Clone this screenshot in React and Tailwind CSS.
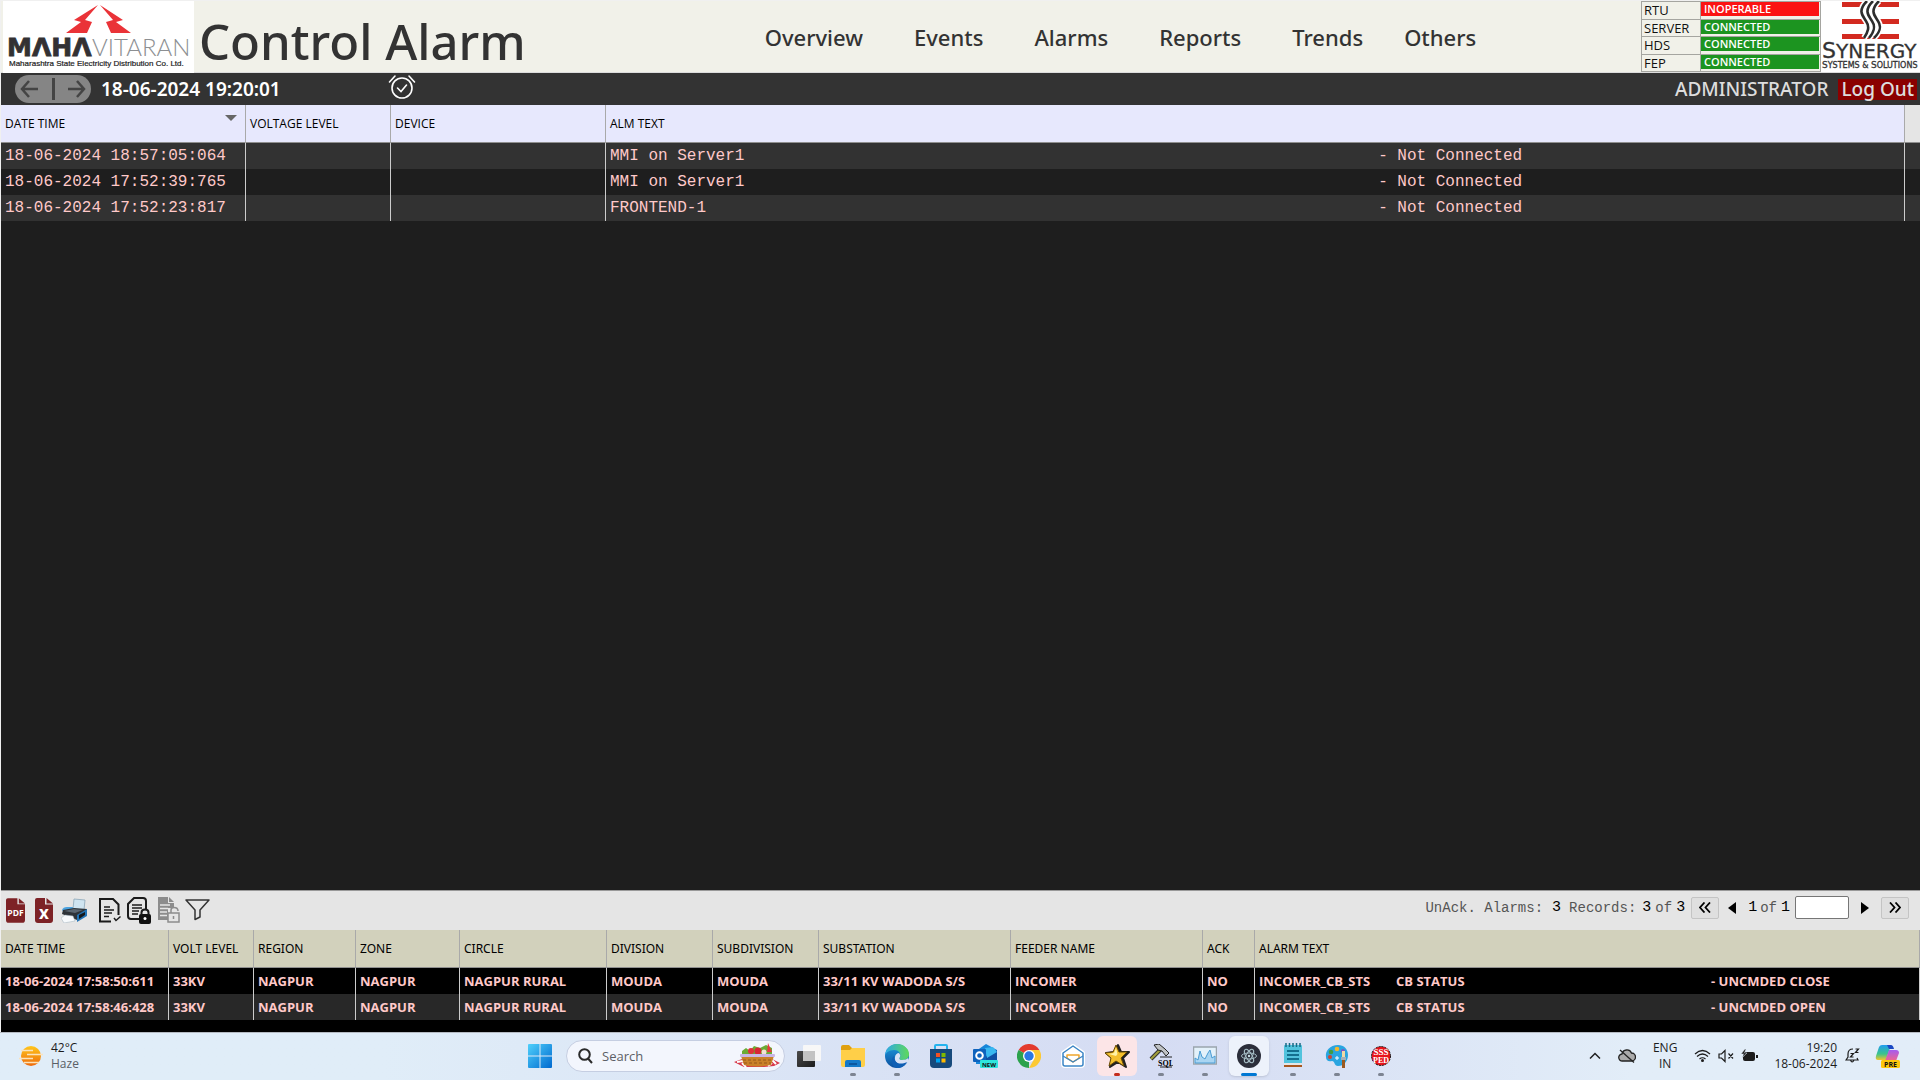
import React from "react";

const alarms = [
  { time: "18-06-2024 18:57:05:064", text: "MMI on Server1", state: "- Not Connected" },
  { time: "18-06-2024 17:52:39:765", text: "MMI on Server1", state: "- Not Connected" },
  { time: "18-06-2024 17:52:23:817", text: "FRONTEND-1", state: "- Not Connected" },
];

const events = [
  { time: "18-06-2024 17:58:50:611", state: "- UNCMDED CLOSE" },
  { time: "18-06-2024 17:58:46:428", state: "- UNCMDED OPEN" },
];

const statuses = [
  { name: "RTU", value: "INOPERABLE", color: "bg-[#fb1313]" },
  { name: "SERVER", value: "CONNECTED", color: "bg-[#1c9420]" },
  { name: "HDS", value: "CONNECTED", color: "bg-[#1c9420]" },
  { name: "FEP", value: "CONNECTED", color: "bg-[#1c9420]" },
];

const menu = ["Overview", "Events", "Alarms", "Reports", "Trends"];

function MahavitaranLogo() {
  return (
    <svg className="h-[72px] w-[191px] shrink-0 bg-white" viewBox="0 0 191 72" role="img" aria-label="Mahavitaran">
      <path d="M95 4 L71 19 L78 21 L63 32 L84 32 L89 21 L82 19 Z" fill="#ea3338" />
      <path d="M97 4 L120 19 L113 21 L128 32 L108 32 L103 21 L110 19 Z" fill="#ea3338" />
      <text x="4" y="55" fontFamily="DejaVu Sans" fontWeight="700" fontSize="25" fill="#333133" stroke="#333133" strokeWidth="0.8">MΛHΛ</text>
      <text x="89" y="55" fontFamily="Lato" fontWeight="300" fontSize="24" fill="#8d8f92">VITARAN</text>
      <text x="6" y="65" fontFamily="Liberation Sans" fontSize="8" fill="#222" stroke="#222" strokeWidth="0.2">
        Maharashtra State Electricity Distribution Co. Ltd.
      </text>
    </svg>
  );
}

function SynergyLogo() {
  return (
    <svg className="h-[71px] w-[99px] shrink-0 bg-white" viewBox="0 0 99 71" role="img" aria-label="Synergy Systems and Solutions">
      <g fill="#d32a20">
        <rect x="21" y="1" width="57" height="5" />
        <rect x="21" y="18" width="57" height="5" />
        <rect x="21" y="33" width="57" height="5" />
      </g>
      <g fill="none">
        <path d="M46 0 C36 10 42 15 45 20 C49 26 47 31 43 37" stroke="#fff" strokeWidth="6" />
        <path d="M52 0 C42 10 48 15 51 20 C55 26 53 31 48 37" stroke="#fff" strokeWidth="6" />
        <path d="M58 0 C48 10 54 15 57 20 C61 26 59 31 53 37" stroke="#fff" strokeWidth="6" />
        <path d="M46 0 C36 10 42 15 45 20 C49 26 47 31 43 37" stroke="#2d2d2d" strokeWidth="2.6" />
        <path d="M52 0 C42 10 48 15 51 20 C55 26 53 31 48 37" stroke="#2d2d2d" strokeWidth="2.6" />
        <path d="M58 0 C48 10 54 15 57 20 C61 26 59 31 53 37" stroke="#2d2d2d" strokeWidth="2.6" />
      </g>
      <text x="1" y="57" fontFamily="DejaVu Sans" fontSize="22" fill="#333" stroke="#333" strokeWidth="0.3">
        S<tspan fontSize="20">YNERGY</tspan>
      </text>
      <text x="1" y="67" fontFamily="DejaVu Sans" fontSize="9" fill="#333" stroke="#333" strokeWidth="0.3">
        S<tspan fontSize="8">YSTEMS &amp; </tspan>S<tspan fontSize="8">OLUTIONS</tspan>
      </text>
    </svg>
  );
}

function Header() {
  return (
    <header className="flex h-[72px] items-start border-b border-[#dcdcdc] bg-[#f1f1e9]">
      <div className="flex w-[39.8%] items-start pl-[2px]">
        <MahavitaranLogo />
        <h1 className="ml-[5px] mt-3 whitespace-nowrap font-['Noto_Sans'] text-[49px] font-medium leading-[56px] text-[#333]">
          Control Alarm
        </h1>
      </div>
      <nav className="flex gap-[41px] pt-[21px] font-['Noto_Sans'] text-[22px] font-medium leading-[30px] text-[#333]">
        <div className="flex gap-[51px]">
          {menu.map((m) => (
            <a key={m} href="#">{m}</a>
          ))}
        </div>
        <a href="#">Others</a>
      </nav>
      <div className="flex flex-1 items-start justify-end">
        <table className="h-[71px] w-[180px] border-collapse font-['Open_Sans'] text-[12px] leading-4">
          <tbody>
            {statuses.map((s) => (
              <tr key={s.name} className="border border-[#a5a5a0]">
                <th scope="row" className="w-[59px] border-r border-[#a5a5a0] p-0 pl-[2px] text-left align-top text-[13px] font-normal text-[#111]">{s.name}</th>
                <td className="p-0 pr-px align-top">
                  <div className={`${s.color} h-[14px] pl-[3px] text-[11px] font-semibold leading-[14px] text-white`}>{s.value}</div>
                </td>
              </tr>
            ))}
          </tbody>
        </table>
        <SynergyLogo />
      </div>
    </header>
  );
}

function InfoBar() {
  return (
    <div className="flex h-8 items-center bg-[#333] pr-[3px] font-['Noto_Sans'] text-[19px] font-medium leading-[22px] text-[#ddd]">
      <div className="ml-[14px] flex h-7 w-[76px] items-center justify-between rounded-full bg-[#858585] px-1">
        <button type="button" aria-label="Back">
          <svg width="20" height="20" viewBox="0 0 20 20" fill="none" stroke="#444" strokeWidth="2.5"><path d="M10 2 L3 10 L10 18 M3 10 H19" /></svg>
        </button>
        <span className="h-[22px] w-[3px] bg-[#444]" />
        <button type="button" aria-label="Forward">
          <svg width="20" height="20" viewBox="0 0 20 20" fill="none" stroke="#444" strokeWidth="2.5"><path d="M10 2 L17 10 L10 18 M1 10 H17" /></svg>
        </button>
      </div>
      <time className="ml-[10px] w-[287px] font-semibold text-white">18-06-2024 19:20:01</time>
      <button type="button" aria-label="Acknowledge alarms" className="mb-1">
        <svg width="28" height="26" viewBox="0 0 28 26" fill="none" stroke="#fff" strokeWidth="1.6" strokeLinecap="round">
          <circle cx="14" cy="14" r="10" />
          <path d="M9.500 14 L13 17.500 L18.500 11 M1.500 8 L7 2 M26.500 8 L21 2" />
        </svg>
      </button>
      <span className="ml-auto mr-[10px]">ADMINISTRATOR</span>
      <button type="button" className="h-[21px] bg-[#8b0000] px-[3px] leading-[21px]">Log Out</button>
    </div>
  );
}

const headCell = "h-[38px] border-b border-r border-[#a9a9a9] border-b-[#8f8f8f] p-0 pl-1 text-left font-normal";

function AlarmTable() {
  return (
    <table className="w-full table-fixed border-separate border-spacing-0">
      <colgroup>
        <col className="w-[245px]" />
        <col className="w-[145px]" />
        <col className="w-[215px]" />
        <col />
        <col className="w-[15px]" />
      </colgroup>
      <thead>
        <tr className="bg-[#e7e8fd] font-['Open_Sans'] text-[12px] text-black">
          <th className={headCell}>
            <div className="flex items-center justify-between">
              DATE TIME
              <svg className="mb-3 mr-2" width="12" height="6" viewBox="0 0 12 6"><path d="M0 0H12L6 6Z" fill="#666" /></svg>
            </div>
          </th>
          <th className={headCell}>VOLTAGE LEVEL</th>
          <th className={headCell}>DEVICE</th>
          <th className={headCell}>ALM TEXT</th>
          <th className="border-b border-[#8f8f8f] bg-[#e5e5e5] p-0" />
        </tr>
      </thead>
      <tbody className="font-['Liberation_Mono',monospace] text-[16px] leading-[26px] text-[#ffc9c9]">
        {alarms.map((a) => (
          <tr key={a.time} className="h-[26px] odd:bg-[#323232] even:bg-[#1e1e1e]">
            <td className="border-r border-[#ccc] p-0 pl-1">{a.time}</td>
            <td className="border-r border-[#ccc] p-0" />
            <td className="border-r border-[#ccc] p-0" />
            <td className="whitespace-pre border-r border-[#ccc] p-0 pl-1">{a.text.padEnd(80) + a.state}</td>
            <td className="p-0" />
          </tr>
        ))}
      </tbody>
    </table>
  );
}

function DocIcons() {
  return (
    <div className="mb-px flex items-center">
      <button type="button" aria-label="Export PDF" className="ml-[5px]">
        <svg width="19" height="25" viewBox="0 0 20 26">
          <path d="M2 0H12V6.500H20V23Q20 26 17 26H3Q0 26 0 23V2Q0 0 2 0Z" fill="#7d2226" />
          <path d="M13.500 0L20 5.500H13.500Z" fill="#7d2226" />
          <text x="10" y="18.500" textAnchor="middle" fontFamily="Open Sans" fontWeight="700" fontSize="9" fill="#fff">PDF</text>
        </svg>
      </button>
      <button type="button" aria-label="Export Excel" className="ml-[10px]">
        <svg width="18" height="25" viewBox="0 0 18 25">
          <path d="M2 0H10V6.500H18V22Q18 25 15 25H3Q0 25 0 22V2Q0 0 2 0Z" fill="#7d2226" />
          <path d="M11.500 0L18 5.500H11.500Z" fill="#7d2226" />
          <text x="9" y="21" textAnchor="middle" fontFamily="Open Sans" fontWeight="700" fontSize="17" fill="#fff">x</text>
        </svg>
      </button>
      <button type="button" aria-label="Print" className="ml-2">
        <svg width="27" height="25" viewBox="0 0 27 25">
          <path d="M1 12Q2 9 6 9H13V12L3 15Z" fill="#4ba3e0" />
          <path d="M13 1L24 2L23 12L12 11Z" fill="#cfe4f0" stroke="#8ba6b8" strokeWidth="0.8" />
          <path d="M2 12L13 10L26 11V15L16 22L1 16Z" fill="#2e3338" />
          <path d="M3 13L13 11L22 12L14 15Z" fill="#5b6670" />
          <path d="M16 17L26 11V18L16 24Z" fill="#2373b4" />
          <path d="M18 17L24 14V17L18 21Z" fill="#16181a" />
          <path d="M4 17L12 18L14 23L3 25L0 20Z" fill="#f7fafc" stroke="#9eb0bc" strokeWidth="0.5" />
        </svg>
      </button>
      <button type="button" aria-label="Acknowledge page" className="ml-[11px]">
        <svg width="22" height="25" viewBox="0 0 22 25" fill="none" stroke="#1b1b1b" strokeWidth="2">
          <path d="M12 23.500H1V1H14L19.500 6.500V17" />
          <path d="M5 9H11M5 12H15M5 15H13M5 18.500H10M15 20L17 22.500L21.500 18.500" strokeWidth="1.500" />
        </svg>
      </button>
      <button type="button" aria-label="Lock page" className="ml-[6px]">
        <svg width="24" height="27" viewBox="0 0 24 27" fill="none" stroke="#1b1b1b" strokeWidth="2">
          <path d="M12 22H4Q1 22 1 19V7L7 1H16Q19 1 19 4V12" />
          <path d="M5 8H15M5 11H15M5 14H12M5 17H11" strokeWidth="1.700" />
          <rect x="12" y="17" width="12" height="10" rx="2" fill="#111" stroke="none" />
          <path d="M14.500 18V15.500Q14.500 12.500 18 12.500T21.500 15.500V18" />
          <circle cx="18" cy="21.500" r="1.500" fill="#fff" stroke="none" />
        </svg>
      </button>
      <button type="button" aria-label="Unlock page" className="ml-[7px]">
        <svg width="22" height="26" viewBox="0 0 22 26" fill="none" stroke="#8c8c8c" strokeWidth="1.5">
          <path d="M0 0H10V6H16V11H10V23H0Z" fill="#8c8c8c" stroke="none" />
          <path d="M11 0L16 5H11Z" fill="#8c8c8c" stroke="none" />
          <path d="M2 8H12M2 11.500H10M2 15H9M2 18.500H9" stroke="#e5e5e5" />
          <rect x="10" y="16" width="11" height="9" fill="#e5e5e5" />
          <path d="M13 16V13Q13 10.500 16 10.500Q20 10.500 20 14M15.500 19V22" />
        </svg>
      </button>
      <button type="button" aria-label="Filter" className="ml-[5px]">
        <svg width="25" height="22" viewBox="0 0 25 22" fill="none" stroke="#333" strokeWidth="1.500" strokeLinejoin="round">
          <path d="M1 1H24L15 11V18L10 20.500V11Z" />
        </svg>
      </button>
    </div>
  );
}

function Toolbar() {
  return (
    <div className="flex h-10 items-center border-t border-[#999] bg-[#e5e5e5] pr-[11px]">
      <DocIcons />
      <div className="mb-[6px] ml-auto flex items-center whitespace-pre font-['Liberation_Mono',monospace] text-[14px] leading-[22px] text-[#555]">
        <span>UnAck. Alarms:</span>
        <span className="ml-[9px] text-[15px] text-black">3</span>
        <span className="ml-2">Records:</span>
        <span className="ml-[6px] text-[15px] text-black">3</span>
        <span className="mx-1">of</span>
        <span className="text-[15px] text-black">3</span>
        <button type="button" aria-label="First page" className="ml-[6px] flex h-[22px] w-7 items-center justify-center rounded-xs border border-[#c4c4c4] bg-[#dfdfdf]">
          <svg width="12" height="11" viewBox="0 0 12 11" fill="none" stroke="#000" strokeWidth="1.800"><path d="M5.500 .5L1 5.500L5.500 10.500M11 .5L6.500 5.500L11 10.500" /></svg>
        </button>
        <button type="button" aria-label="Previous page" className="ml-[9px]">
          <svg width="8" height="12" viewBox="0 0 8 12"><path d="M8 0V12L0 6Z" fill="#000" /></svg>
        </button>
        <span className="ml-3 text-[15px] text-black">1</span>
        <span className="mx-[3px]">of</span>
        <span className="ml-px text-[15px] text-black">1</span>
        <input aria-label="Page number" className="ml-[5px] h-[23px] w-[54px] rounded-xs border border-[#767676] bg-white px-1 text-black" />
        <button type="button" aria-label="Next page" className="ml-3">
          <svg width="8" height="12" viewBox="0 0 8 12"><path d="M0 0V12L8 6Z" fill="#000" /></svg>
        </button>
        <button type="button" aria-label="Last page" className="ml-3 flex h-[22px] w-7 items-center justify-center rounded-xs border border-[#c4c4c4] bg-[#dfdfdf]">
          <svg width="12" height="11" viewBox="0 0 12 11" fill="none" stroke="#000" strokeWidth="1.800"><path d="M1 .5L5.500 5.500L1 10.500M6.500 .5L11 5.500L6.500 10.500" /></svg>
        </button>
      </div>
    </div>
  );
}

const columns = ["DATE TIME", "VOLT LEVEL", "REGION", "ZONE", "CIRCLE", "DIVISION", "SUBDIVISION", "SUBSTATION", "FEEDER NAME", "ACK", "ALARM TEXT"];

function EventTable() {
  const cell = "border-r border-[#ccc] p-0 pl-1 pt-px whitespace-nowrap";
  return (
    <div className="bg-black pb-3">
      <table className="w-full table-fixed border-separate border-spacing-0 font-['Open_Sans'] text-[12px]">
        <colgroup>
          <col className="w-[168px]" />
          <col className="w-[85px]" />
          <col className="w-[102px]" />
          <col className="w-[104px]" />
          <col className="w-[147px]" />
          <col className="w-[106px]" />
          <col className="w-[106px]" />
          <col className="w-[192px]" />
          <col className="w-[192px]" />
          <col className="w-[52px]" />
          <col />
        </colgroup>
        <thead>
          <tr className="bg-[#d2d1bc] font-['Noto_Sans'] text-black">
            {columns.map((c) => (
              <th key={c} className={headCell}>{c}</th>
            ))}
          </tr>
        </thead>
        <tbody className="text-[13px] font-bold leading-[25px] text-[#ffc9c9]">
          {events.map((e) => (
            <tr key={e.time} className="h-[26px] odd:bg-black even:bg-[#282828]">
              {[e.time, "33KV", "NAGPUR", "NAGPUR", "NAGPUR RURAL", "MOUDA", "MOUDA", "33/11 KV WADODA S/S", "INCOMER", "NO"].map((v, i) => (
                <td key={i} className={cell}>{v}</td>
              ))}
              <td className={cell}>
                <div className="flex">
                  <span className="w-[137px]">INCOMER_CB_STS</span>
                  <span className="w-[315px]">CB STATUS</span>
                  <span>{e.state}</span>
                </div>
              </td>
            </tr>
          ))}
        </tbody>
      </table>
    </div>
  );
}

function TaskIcon({ label, children, mark = "", tile = "" }) {
  return (
    <button type="button" aria-label={label} className={`relative mx-[2px] flex h-10 w-10 items-center justify-center rounded-md ${tile}`}>
      {children}
      {mark && <span className={`absolute bottom-0 rounded-full ${mark}`} />}
    </button>
  );
}

const running = "h-[3px] w-[6px] bg-[#7d8492]";

function TaskIcons() {
  return (
    <>
      <TaskIcon label="Task view">
        <svg width="24" height="24" viewBox="0 0 24 24">
          <defs><linearGradient id="tv" x1="0" y1="0" x2="1" y2="1"><stop offset="0" stopColor="#4a4a4a" /><stop offset="1" stopColor="#1c1c1c" /></linearGradient></defs>
          <rect x="0" y="7" width="18" height="16" rx="1" fill="url(#tv)" />
          <rect x="6" y="1" width="18" height="16" rx="1" fill="#f7f7f7" />
          <rect x="6" y="7" width="12" height="10" fill="#c3c3c3" />
        </svg>
      </TaskIcon>
      <TaskIcon label="File Explorer" mark={running}>
        <svg width="24" height="22" viewBox="0 0 24 22">
          <path d="M0 2Q0 0 2 0H8L11 3H22Q24 3 24 5V12H0Z" fill="#e0a010" />
          <path d="M0 5H9L11 3H24V20Q24 22 22 22H2Q0 22 0 20Z" fill="#ffcf48" />
          <path d="M4 22V17Q4 15 6 15H18Q20 15 20 17V22Z" fill="#1479c9" />
          <rect x="8" y="18" width="8" height="2" fill="#0b57a0" />
        </svg>
      </TaskIcon>
      <TaskIcon label="Edge" mark={running}>
        <svg width="24" height="24" viewBox="0 0 24 24">
          <defs>
            <linearGradient id="eg" x1="0" y1="0" x2="1" y2="0"><stop offset="0" stopColor="#2da8e8" /><stop offset="1" stopColor="#5fd95a" /></linearGradient>
            <linearGradient id="eb" x1="0" y1="0" x2="0" y2="1"><stop offset="0" stopColor="#1c9be0" /><stop offset="1" stopColor="#0c4f9e" /></linearGradient>
          </defs>
          <circle cx="12" cy="12" r="12" fill="url(#eb)" />
          <path d="M0 11C1 4 6 0 12 0C19 0 24 5 24 10C24 14 21 16 17 16C14 16 14 14 15 13C16 11 15 6 9 6C4 6 1 9 0 11Z" fill="url(#eg)" />
          <path d="M15 13C14 14 14 16 17 16C20 16 22 15 23 14L24 17L20 21C14 22 9 18 10 13C10 11 12 9 14 9Q16 11 15 13Z" fill="#d8e2f6" />
          <path d="M9 12C8 18 14 22 22 18C20 22 16 24 12 24C5 22 6 14 9 12Z" fill="#0f5fb4" />
        </svg>
      </TaskIcon>
      <TaskIcon label="Microsoft Store">
        <svg width="24" height="24" viewBox="0 0 24 24">
          <path d="M6 6V2Q6 1 7 1H17Q18 1 18 2V6" fill="none" stroke="#25b3ee" strokeWidth="2" />
          <path d="M1 5H23V20Q23 24 19 24H5Q1 24 1 20Z" fill="#174a7c" />
          <rect x="7" y="9" width="4" height="4" fill="#f25022" /><rect x="12.500" y="9" width="4" height="4" fill="#7fba00" />
          <rect x="7" y="14.500" width="4" height="4" fill="#00a4ef" /><rect x="12.500" y="14.500" width="4" height="4" fill="#ffb900" />
        </svg>
      </TaskIcon>
      <TaskIcon label="Outlook">
        <svg width="25" height="24" viewBox="0 0 25 24">
          <path d="M3 7L13 0L24 6V20H3Z" fill="#1686d9" />
          <path d="M12 13L24 6V21H10Z" fill="#0f4fa3" />
          <path d="M12 4L20 3L24 8L14 14Z" fill="#39b8f0" />
          <rect x="0" y="5" width="13" height="13" rx="1" fill="#0f63bd" />
          <circle cx="6.500" cy="11.500" r="3.300" fill="none" stroke="#fff" strokeWidth="2" />
          <rect x="7" y="16" width="18" height="8" rx="1" fill="#2ee6dc" />
          <text x="16" y="22.500" textAnchor="middle" fontFamily="Open Sans" fontWeight="700" fontSize="6" fill="#111">NEW</text>
        </svg>
      </TaskIcon>
      <TaskIcon label="Chrome">
        <svg width="24" height="24" viewBox="0 0 24 24">
          <path d="M12 12L1.600 6A12 12 0 0 1 22.400 6Z" fill="#e33b2e" />
          <path d="M12 12L12 24A12 12 0 0 1 1.600 6Z" fill="#2ba24c" />
          <path d="M12 6H22.400A12 12 0 0 1 12 24L17.200 15Z" fill="#fcc934" />
          <circle cx="12" cy="12" r="6" fill="#fff" /><circle cx="12" cy="12" r="4.700" fill="#2a78e4" />
        </svg>
      </TaskIcon>
      <TaskIcon label="Mail">
        <svg width="24" height="24" viewBox="0 0 24 24" fill="#fff" strokeLinejoin="round">
          <path d="M2 9L12 2L22 9V20Q22 22 20 22H4Q2 22 2 20Z" stroke="#fff" strokeWidth="4" />
          <path d="M2 9L12 2L22 9V20Q22 22 20 22H4Q2 22 2 20Z" stroke="#3c86c6" strokeWidth="1.500" />
          <path d="M6 11H18V14L12 18L6 14Z" stroke="#f0a72c" strokeWidth="1.500" />
          <path d="M2 12L12 18L22 12" fill="none" stroke="#3c86c6" strokeWidth="1.300" />
        </svg>
      </TaskIcon>
      <TaskIcon label="Favourites" tile="bg-[#fce5e7]" mark="h-[3px] w-[6px] bg-[#c42b1c]">
        <svg width="26" height="26" viewBox="0 0 26 26" strokeLinejoin="round">
          <path d="M14 2L17 9L25 9L19 15L22 24L14 19L6 24L8 15L2 10L10 9Z" fill="#222" stroke="#222" strokeWidth="2" />
          <path d="M12 2L15 9L23 9L17 15L20 23L12 18L5 23L7 15L1 10L9 9Z" fill="#f4bf2d" stroke="#6b4c05" strokeWidth="1" />
          <path d="M12 5L13.500 11L12 13L5 11L10 10Z" fill="#fff3a8" />
        </svg>
      </TaskIcon>
      <TaskIcon label="SQL tool" mark={running}>
        <svg width="24" height="24" viewBox="0 0 24 24">
          <path d="M12 5L2 15" stroke="#333" strokeWidth="4" /><path d="M12 5L2 15" stroke="#a3a03c" strokeWidth="2" />
          <path d="M5 1L10 0L16 5L20 9L17 12L13 7L9 6Z" fill="#bfc2c4" stroke="#222" strokeWidth="1" />
          <path d="M11 13H23M11 23H23" stroke="#222" />
          <text x="17" y="21.500" textAnchor="middle" fontFamily="Liberation Serif" fontWeight="700" fontSize="8" fill="#000">SQL</text>
        </svg>
      </TaskIcon>
      <TaskIcon label="Performance monitor" mark={running}>
        <svg width="24" height="20" viewBox="0 0 24 20">
          <rect x=".5" y="1" width="23" height="17" fill="#e3f1fa" stroke="#9aa5ad" strokeWidth="1.500" />
          <path d="M2 16V12L5 14L7 5L9 11L12 13L15 7L17 4L19 12L22 10V17H2Z" fill="#a9d5f2" stroke="#4a9cd4" />
        </svg>
      </TaskIcon>
      <TaskIcon label="Control Alarm" tile="bg-[#edf2fb] shadow-sm" mark="h-[3px] w-4 bg-[#0078d4]">
        <svg width="24" height="24" viewBox="0 0 24 24">
          <circle cx="12" cy="12" r="12" fill="#2b2e3a" />
          <g fill="none" stroke="#a5bcc4" strokeWidth="1">
            <ellipse cx="12" cy="12" rx="7.500" ry="3" />
            <ellipse cx="12" cy="12" rx="7.500" ry="3" transform="rotate(60 12 12)" />
            <ellipse cx="12" cy="12" rx="7.500" ry="3" transform="rotate(120 12 12)" />
          </g>
          <circle cx="12" cy="12" r="1.200" fill="#c5dde4" />
        </svg>
      </TaskIcon>
      <TaskIcon label="Notepad" mark={running}>
        <svg width="20" height="25" viewBox="0 0 20 25">
          <rect x="1" y="2" width="18" height="20" rx="1" fill="#52c3dd" />
          <path d="M3 0V4M6.500 0V4M10 0V4M13.500 0V4M17 0V4" stroke="#176a85" strokeWidth="1.500" />
          <path d="M4 8H16M4 12H16M4 16H16" stroke="#13708e" strokeWidth="1.800" />
          <rect x="1" y="20" width="18" height="2" fill="#e6e6e6" /><rect x="1" y="22" width="18" height="2" fill="#a9571e" />
        </svg>
      </TaskIcon>
      <TaskIcon label="Paint" mark={running}>
        <svg width="24" height="24" viewBox="0 0 24 24">
          <path d="M13 1C5 1 0 7 1 13C1 17 4 18 7 17C10 17 9 22 13 22C19 22 23 17 23 11C23 5 19 1 13 1Z" fill="#2aa5e0" />
          <circle cx="6" cy="8" r="2.300" fill="#3f9b46" /><circle cx="12" cy="5" r="2.300" fill="#f2b72c" /><circle cx="5" cy="13" r="2" fill="#d5432f" /><circle cx="18" cy="7" r="2" fill="#7c56c4" />
          <path d="M17 7H20V14H17Z" fill="#f1d8a4" /><path d="M16 13H21V16H16Z" fill="#a4b0b8" /><path d="M17 16H20V24H17Z" fill="#9b5a20" />
          <path d="M12 12V16M10 14H14" stroke="#fff" strokeWidth="1" />
        </svg>
      </TaskIcon>
      <TaskIcon label="SSS PED" mark={running}>
        <svg width="20" height="20" viewBox="0 0 20 20">
          <circle cx="10" cy="10" r="9.500" fill="#e8151b" stroke="#111" strokeDasharray="2 1" />
          <text x="10" y="9" textAnchor="middle" fontFamily="Liberation Serif" fontWeight="700" fontSize="9" fill="#fff">SSS</text>
          <text x="10" y="16.500" textAnchor="middle" fontFamily="Liberation Serif" fontWeight="700" fontSize="8" fill="#fff">PED</text>
        </svg>
      </TaskIcon>
    </>
  );
}

function Taskbar() {
  return (
    <footer className="grid h-12 grid-cols-[1fr_auto_1fr] items-center border-t border-[#b5bac2] bg-linear-to-r from-[#e0edf8] from-20% via-[#d5dcf3] via-60% to-[#e2edf8] to-85% pb-[2px] font-['Open_Sans'] text-[11px] leading-4 text-[#1c1c1c]">
      <div className="flex items-center pl-[19px]">
        <svg width="24" height="22" viewBox="0 0 24 22">
          <defs><linearGradient id="sun" x1="0" y1="0" x2="0" y2="1"><stop offset="0" stopColor="#ffc61a" /><stop offset="1" stopColor="#ee6a0c" /></linearGradient></defs>
          <circle cx="12" cy="11" r="10" fill="url(#sun)" />
          <path d="M2 5.500H14M8 9.500H24M0 13.500H14M5 17.500H20" stroke="#fbe3bb" strokeWidth="1.300" />
        </svg>
        <div className="ml-2 text-[12px]">
          <div>42°C</div>
          <div className="text-[#5a5f66]">Haze</div>
        </div>
      </div>

      <div className="flex items-center pl-[10px]">
        <button type="button" aria-label="Start" className="ml-[1px] mr-[14px]">
          <svg width="24" height="24" viewBox="0 0 24 24">
            <defs><linearGradient id="win" x1="0" y1="0" x2="1" y2="1"><stop offset="0" stopColor="#4fd0fb" /><stop offset="1" stopColor="#0069cf" /></linearGradient></defs>
            <path d="M0 1Q0 0 1 0H11.500V11.500H0ZM12.500 0H23Q24 0 24 1V11.500H12.500ZM0 12.500H11.500V24H1Q0 24 0 23ZM12.500 12.500H24V23Q24 24 23 24H12.500Z" fill="url(#win)" />
          </svg>
        </button>
        <label className="mr-[2px] flex h-8 w-[219px] items-center rounded-full border border-[#c5cee2] bg-[#f3f6fd] pl-[11px] pr-1">
          <svg width="15" height="16" viewBox="0 0 15 16" fill="none" stroke="#2a2a2a" strokeWidth="2"><circle cx="6.500" cy="6.500" r="5.300" /><path d="M10 10.500L14 15" /></svg>
          <input type="text" aria-label="Search" placeholder="Search" className="ml-[9px] w-0 flex-1 bg-transparent text-[13px] outline-none placeholder:text-[#5c5f66]" />
          <svg width="46" height="25" viewBox="0 0 46 25">
            <path d="M0 19L8 16H38L46 20L40 23L30 24H10Z" fill="#d8394a" />
            <path d="M3 19L9 18M12 24L8 20M38 17L42 21M34 23L38 20" stroke="#fff" strokeWidth="2" />
            <path d="M8 8L12 5L16 8L20 3L26 5L32 2L38 5V12H8Z" fill="#6cab35" />
            <circle cx="17" cy="8" r="3" fill="#e0303b" /><circle cx="24" cy="8" r="3.500" fill="#d82435" /><circle cx="30" cy="9" r="2.500" fill="#f2e3d2" /><path d="M33 9L34 0L38 9Z" fill="#e8383f" />
            <path d="M7 13H40L37 22Q23 25 10 22Z" fill="#c98128" />
            <path d="M9 17H38M10 20H37" stroke="#96561a" strokeDasharray="3 2" />
            <rect x="6" y="11" width="35" height="3" rx="1" fill="#c9b6e6" />
          </svg>
        </label>
        <TaskIcons />
      </div>

      <div className="flex items-center justify-end pr-5">
        <button type="button" aria-label="Show hidden icons" className="mr-[17px]">
          <svg width="12" height="7" viewBox="0 0 12 7" fill="none" stroke="#222" strokeWidth="1.500"><path d="M1 6.500L6 1.500L11 6.500" /></svg>
        </button>
        <svg className="mr-[17px]" width="18" height="14" viewBox="0 0 18 14" fill="#aaa" stroke="#222" strokeWidth="1.300">
          <path d="M4.500 12A3.500 3.500 0 0 1 4 5A5 5 0 0 1 13.500 4A4 4 0 0 1 13.500 12Z" /><path d="M2 1L16 13.500" />
        </svg>
        <div className="mr-[17px] text-center text-[12px]">
          <div>ENG</div>
          <div>IN</div>
        </div>
        <svg className="mr-[7px]" width="17" height="14" viewBox="0 0 17 14" fill="none" stroke="#1c1c1c" strokeWidth="1.200">
          <path d="M1 5Q8.500 -2 16 5M3 7.500Q8.500 2.500 14 7.500M5.500 10Q8.500 7.500 11.500 10" /><circle cx="8.500" cy="11.500" r="1.500" fill="#1c1c1c" stroke="none" />
        </svg>
        <svg className="mr-[7px]" width="16" height="14" viewBox="0 0 16 14" fill="none" stroke="#1c1c1c" strokeWidth="1.200">
          <path d="M1 5H3.500L7 1.500V12.500L3.500 9H1ZM10.500 4.500L15 9.500M15 4.500L10.500 9.500" />
        </svg>
        <svg className="mr-4" width="17" height="13" viewBox="0 0 17 13" fill="#1c1c1c">
          <rect x="2" y="3" width="12" height="9" rx="2" /><rect x="15" y="6" width="2" height="3" /><path d="M4 0L0 5H3L1 9L6 4H3.500L5 0Z" stroke="#e2edf8" strokeWidth="0.500" />
        </svg>
        <div className="mr-2 text-right text-[12px]">
          <div>19:20</div>
          <div>18-06-2024</div>
        </div>
        <svg className="mr-[15px]" width="15" height="15" viewBox="0 0 15 15" fill="none" stroke="#1c1c1c" strokeWidth="1.200">
          <path d="M8 1Q3 1 3 6V9L1 12H13L12 10M5.500 12Q7 16 9 12" /><path d="M5.500 5.500H8.500L5.500 9H8.500M10.500 1H13.500L10.500 4.500H13.500" />
        </svg>
        <svg width="25" height="24" viewBox="0 0 25 24">
          <defs>
            <linearGradient id="cpa" x1="0" y1="0" x2="0" y2="1"><stop offset="0" stopColor="#1f9df0" /><stop offset=".6" stopColor="#3cc48b" /><stop offset="1" stopColor="#f2c62b" /></linearGradient>
            <linearGradient id="cpb" x1="0" y1="0" x2="0" y2="1"><stop offset="0" stopColor="#a45cf0" /><stop offset="1" stopColor="#f2668a" /></linearGradient>
          </defs>
          <path d="M7 1H16L11 16H3Q0 16 1 12L4 3Q5 1 7 1Z" fill="url(#cpa)" />
          <path d="M12 1H16Q18 1 19 5H14Z" fill="#1a49c4" />
          <path d="M14 6H21Q24 6 24 9L21 17H10Z" fill="url(#cpb)" />
          <rect x="6" y="16" width="19" height="8" rx="1.500" fill="#fdc70d" />
          <text x="15.500" y="22.800" textAnchor="middle" fontFamily="Open Sans" fontWeight="700" fontSize="7" fill="#111">PRE</text>
        </svg>
      </div>
    </footer>
  );
}

export default function App() {
  return (
    <div className="flex min-h-screen flex-col bg-[#f0f0f0]">
      <div className="ml-px mt-px flex flex-1 flex-col">
        <Header />
        <InfoBar />
        <main className="flex flex-1 flex-col bg-[#1e1e1e]">
          <div className="flex-1">
            <AlarmTable />
          </div>
          <Toolbar />
          <EventTable />
        </main>
      </div>
      <Taskbar />
    </div>
  );
}
